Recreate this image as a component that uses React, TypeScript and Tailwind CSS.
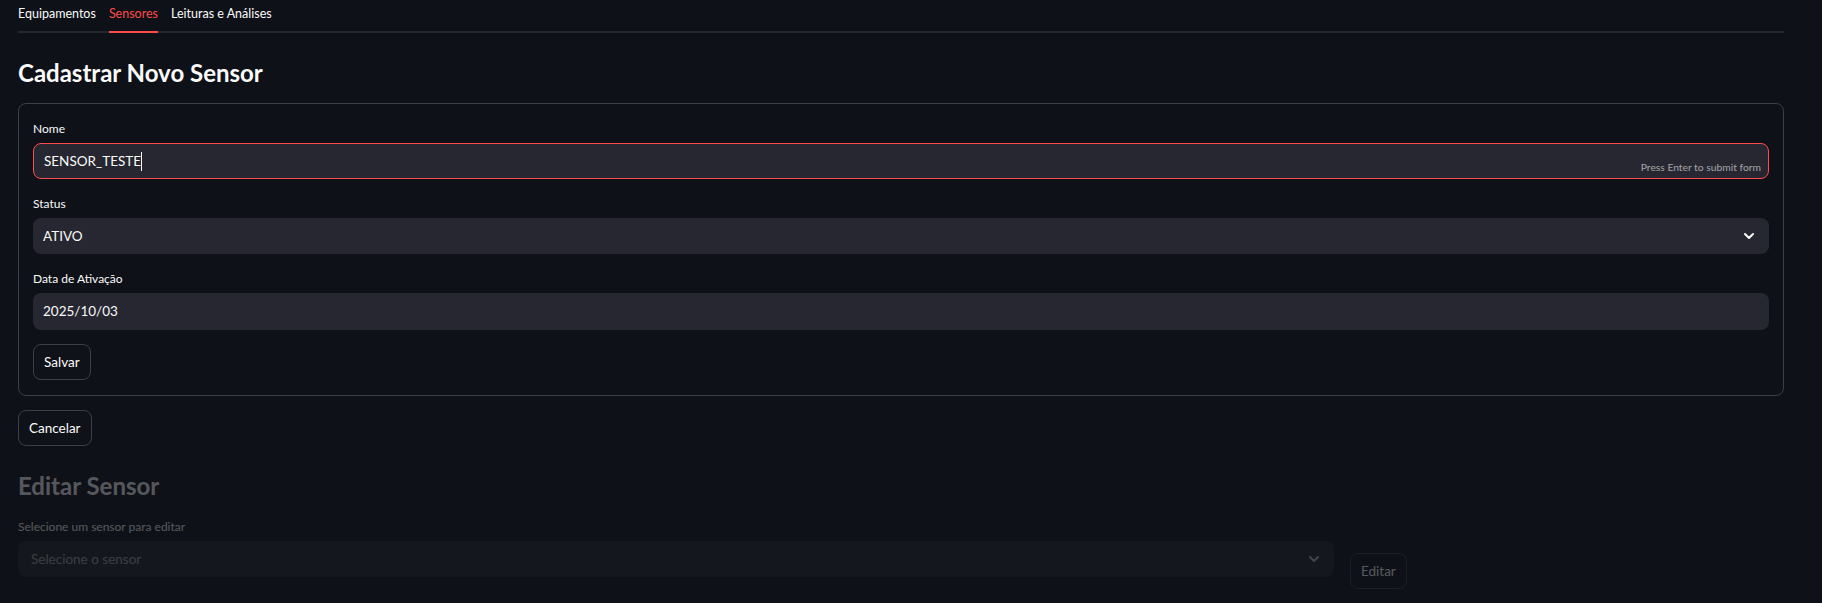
import { ChevronDown } from 'lucide-react';

const tabs = ['Equipamentos', 'Sensores', 'Leituras e Análises'];

function Label({ children }: { children: React.ReactNode }) {
  return <div className="h-[20px] leading-[20px] text-[12px] text-[#fafafa]">{children}</div>;
}

export default function App() {
  return (
    <div className="min-h-screen bg-[#0e1117] text-[#fafafa] font-['Lato','Noto_Sans',sans-serif]">
      <div className="w-[1766px] ml-[18px]">
        {/* Tabs */}
        <div className="flex gap-[13px] border-b-2 border-[#262730] h-[33px]">
          {tabs.map((tab) => (
            <div
              key={tab}
              className={
                tab === 'Sensores'
                  ? 'pt-[4px] h-[33px] -mb-[2px] border-b-2 border-[#ff4b4b] text-[#ff4b4b] text-[12.5px] leading-[20px]'
                  : 'pt-[4px] h-[33px] text-[12.5px] leading-[20px]'
              }
            >
              {tab}
            </div>
          ))}
        </div>

        <h2 className="mt-[23px] text-[24px] leading-[34px] font-bold">Cadastrar Novo Sensor</h2>

        {/* Form */}
        <div className="mt-[13px] border border-[#3d3f44] rounded-lg px-[14px] pt-[15px] pb-[15px] flex flex-col">
          <Label>Nome</Label>
          <div className="relative mt-[4px] h-[36px] rounded-lg border border-[#ff4b4b] bg-[#262730] flex items-center pl-[10px]">
            <span className="text-[13.5px]">SENSOR_TESTE</span>
            <span className="w-px h-[19px] bg-[#fafafa]" />
            <span className="absolute right-[7px] bottom-[3px] text-[10.3px] text-[#fafafa]/60">
              Press Enter to submit form
            </span>
          </div>

          <div className="mt-[15px]">
            <Label>Status</Label>
          </div>
          <div className="mt-[4px] h-[36px] rounded-lg bg-[#262730] flex items-center justify-between pl-[10px] pr-[12px]">
            <span className="text-[13.5px]">ATIVO</span>
            <ChevronDown size={16} strokeWidth={3} className="text-[#fafafa]" />
          </div>

          <div className="mt-[15px]">
            <Label>Data de Ativação</Label>
          </div>
          <div className="mt-[4px] h-[37px] rounded-lg bg-[#262730] flex items-center pl-[10px]">
            <span className="text-[13.5px]">2025/10/03</span>
          </div>

          <div className="mt-[14px]">
            <button className="h-[36px] px-[10px] rounded-lg border border-[#3d3f44] bg-[#0f1218] text-[13.5px]">
              Salvar
            </button>
          </div>
        </div>

        <button className="mt-[14px] h-[36px] px-[10px] rounded-lg border border-[#3d3f44] bg-[#0f1218] text-[13.5px]">
          Cancelar
        </button>

        {/* Stale section */}
        <div className="mt-[23px] opacity-[0.3]">
          <h2 className="text-[24px] leading-[34px] font-bold">Editar Sensor</h2>
          <div className="mt-[14px] flex gap-[16px]">
            <div className="w-[1316px]">
              <Label>Selecione um sensor para editar</Label>
              <div className="mt-[4px] h-[36px] rounded-lg bg-[#262730] flex items-center justify-between pl-[13px] pr-[12px]">
                <span className="text-[13.5px] text-[#fafafa]/60">Selecione o sensor</span>
                <ChevronDown size={16} strokeWidth={3} className="text-[#fafafa]/70" />
              </div>
            </div>
            <div className="pt-[36px]">
              <button className="h-[36px] px-[10px] rounded-lg border border-[#3d3f44] text-[13.5px]">
                Editar
              </button>
            </div>
          </div>
        </div>
      </div>
    </div>
  );
}
